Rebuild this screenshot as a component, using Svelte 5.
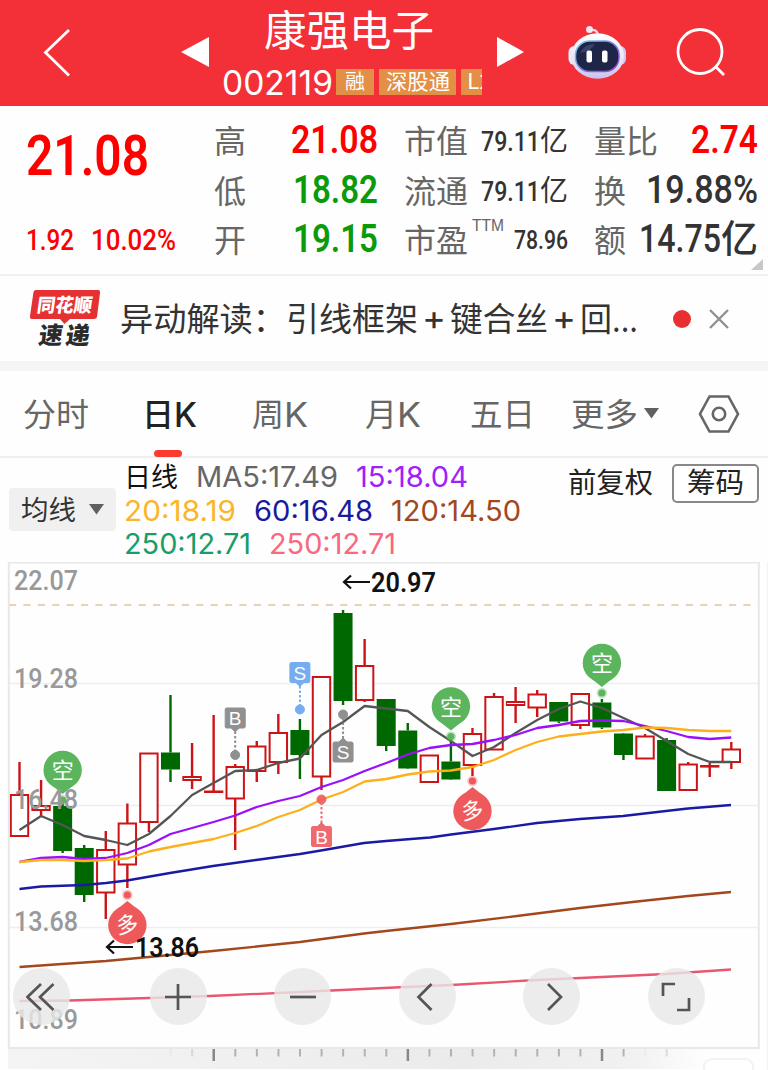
<script lang="ts">
	const step = 21.57;
	const cx = (i: number) => 19.5 + i * step;

	// [up, body top, body bottom, high, low]
	const candles: [number, number, number, number, number][] = [
		[1, 795, 836, 762, 836],
		[1, 806, 810, 780, 816],
		[0, 806, 851, 798, 853],
		[0, 848, 895, 845, 902],
		[1, 850, 892.5, 831, 919],
		[1, 823.5, 864.5, 803.5, 888],
		[1, 753.5, 822, 753, 832],
		[0, 752.5, 769.5, 695, 782],
		[1, 777, 780, 743, 789],
		[1, 791.5, 792, 715, 792],
		[1, 767, 798.5, 764, 850],
		[1, 746.5, 771, 741, 782],
		[1, 733, 762, 714, 774],
		[0, 730, 755, 719, 779],
		[1, 677, 776.5, 677, 790],
		[0, 613, 701, 610, 705],
		[1, 666, 700, 639, 702],
		[0, 699, 746, 699, 751],
		[0, 730.5, 768.5, 723, 769],
		[1, 755.5, 782, 756, 782],
		[0, 761.5, 779.5, 738, 780],
		[1, 734, 765, 728, 776],
		[1, 697, 749.5, 693, 749],
		[1, 702, 705, 687, 723],
		[1, 694.5, 707.5, 690, 717],
		[0, 702, 721.5, 702, 723],
		[1, 694, 725, 694, 729],
		[0, 702.5, 727.5, 699, 729],
		[0, 733.5, 755, 733, 760],
		[1, 736.5, 758.5, 734, 758],
		[0, 740, 791, 738, 791],
		[1, 764.5, 790, 762, 790],
		[1, 766, 766.6, 763, 777],
		[1, 749.5, 762, 742, 769]
	];

	const ma5 = [830, 816, 825, 836, 840, 845, 834, 816, 795, 783, 771, 770, 763, 758.5, 735, 722, 706, 708.5, 711, 727, 741, 756, 747, 733, 720, 709, 701.5, 708, 718, 728, 741, 754, 762, 762];
	const ma15 = [862, 858, 857, 859, 858, 853, 845, 834, 828, 822, 815.5, 807, 801, 796, 787, 780, 771, 763, 754.5, 748, 745, 744, 740, 735, 728, 725, 721, 720.5, 721, 726, 731, 737, 739, 737.5];
	const ma20 = [862, 860, 860, 861, 860, 858.5, 851.5, 847, 843, 839, 833, 826, 817, 810, 799.5, 792, 781.5, 779, 774.5, 771.5, 770.5, 767, 760, 750, 742, 736.5, 734, 731.5, 730, 727.5, 728, 730, 731, 731];

	const join = (ys: number[]) => ys.map((y, i) => `${cx(i).toFixed(1)},${y}`).join(' ');

	const lines = [
		{ color: '#a3471c', points: '19.5,967 62,964 106,961 213,951 300,942 364,933.5 386,931 451,924 517,916 580,908 637,901.5 688,896 731,892' },
		{ color: '#e8566f', points: '19.5,1001 70,1000.5 149,998 210,996 300,992 384,988 451,985 537,980 602,977 666,974 731,969.5' },
		{ color: '#1a1aa5', points: '19.5,889 41,886.5 84,885 106,883 127,880.5 170,873 213,866 256,860 300,854 321,850.5 364,843 386,841 430,837.5 451,834.5 494,829 537,823 580,819 623,816 666,811 688,808.5 731,805' },
		{ color: '#555', points: join(ma5) },
		{ color: '#9a10fb', points: join(ma15) },
		{ color: '#fbb01c', points: join(ma20) }
	];

	const pins = [
		{ i: 2, y: 770, up: false },
		{ i: 20, y: 706.5, up: false },
		{ i: 27, y: 663, up: false },
		{ i: 5, y: 925, up: true },
		{ i: 21, y: 811, up: true }
	];

	const marks = [
		{ i: 10, y: 718, dot: 755, text: 'B', color: '#858585' },
		{ i: 13, y: 672.5, dot: 709.5, text: 'S', color: '#67a5ef' },
		{ i: 15, y: 752, dot: 714.5, text: 'S', color: '#858585' },
		{ i: 14, y: 836.5, dot: 799.5, text: 'B', color: '#ee5b60' }
	];

	const axis = [
		{ text: '22.07', y: 590 },
		{ text: '19.28', y: 687.5 },
		{ text: '16.48', y: 809 },
		{ text: '13.68', y: 931 },
		{ text: '10.89', y: 1029 }
	];

	const ticks = Array.from({ length: 24 }, (_, i) => ({
		x: 170.6 + i * step,
		major: i % 9 === 2,
		opacity: i < 2 || i > 21 ? 0.3 * (i % 2) + 0.1 : 1
	}));

	const controls = ['first', 'plus', 'minus', 'prev', 'next', 'expand'];
</script>

{#snippet fit(text: string, width: number, size: number, cls = '')}
	<svg class="fit {cls}" {width} height={size}>
		<text y={size * 0.87} font-size={size} textLength={width} lengthAdjust="spacingAndGlyphs">{text}</text>
	</svg>
{/snippet}

<div class="app">
	<header>
		<svg class="back" width="28" height="50" viewBox="43 28 28 50"><path d="M69 30L45.500 52.500L69 75.500" /></svg>
		<svg class="tri" width="28" height="32" viewBox="0 0 28 32"><path d="M0 16L28 1V31Z" /></svg>
		<div class="stock">
			{@render fit('康强电子', 170, 42, 'name')}
			<div class="code">
				{@render fit('002119', 111, 34, 'inter')}
				<div class="tags">
					<span>{@render fit('融', 20, 20)}</span>
					<span class="wide">{@render fit('深股通', 64, 21)}</span>
					<span class="cut">{@render fit('L2', 25, 21)}</span>
				</div>
			</div>
		</div>
		<svg class="tri next" width="28" height="32" viewBox="0 0 28 32"><path d="M27 16L0 1V31Z" /></svg>
		<svg class="robot" width="60" height="56" viewBox="567 23 60 56">
			<defs>
				<linearGradient id="shell" x1="0" y1="0" x2="0" y2="1">
					<stop offset="0" stop-color="#fff" />
					<stop offset=".65" stop-color="#e6e0f5" />
					<stop offset="1" stop-color="#c6c2ee" />
				</linearGradient>
				<linearGradient id="rim" x1="0" y1="0" x2="1" y2="1">
					<stop offset="0" stop-color="#75dff0" />
					<stop offset=".6" stop-color="#7f70dd" />
					<stop offset="1" stop-color="#9c42cc" />
				</linearGradient>
			</defs>
			<path d="M590 28Q598 27 598 34" fill="none" stroke="#f4d5df" stroke-width="2.500" />
			<circle cx="589.500" cy="27.500" r="3.500" fill="#f5e6f0" />
			<rect x="568.500" y="44" width="12" height="19" rx="6" fill="#ece9f8" />
			<rect x="614" y="44" width="12" height="19" rx="6" fill="#cfc9ed" />
			<ellipse cx="597.500" cy="54" rx="26.500" ry="22.800" fill="url(#shell)" />
			<rect x="575.500" y="39" width="43.500" height="30.500" rx="14" fill="#1e2546" stroke="url(#rim)" stroke-width="1.500" />
			<path d="M580 51Q584 42 595 42Q590 50 580 51" fill="#3b4267" />
			<rect x="586.500" y="48.500" width="5.500" height="12" rx="2" fill="#fff" />
			<rect x="602" y="48.500" width="5.500" height="12" rx="2" fill="#fff" />
		</svg>
		<svg class="search" width="50" height="50" viewBox="675 28 50 50">
			<circle cx="699" cy="51.500" r="22" />
			<path d="M715 67L723 75" />
		</svg>
	</header>

	<section class="quote">
		<div class="price red">
			{@render fit('21.08', 123, 55, 'bold')}
			<div class="change">
				{@render fit('1.92', 48, 29, 'semi')}
				{@render fit('10.02%', 85, 29, 'semi')}
			</div>
		</div>
		<dl>
			<div><dt>{@render fit('高', 32, 32)}</dt><dd class="red">{@render fit('21.08', 87, 39, 'bold')}</dd></div>
			<div><dt>{@render fit('低', 32, 32)}</dt><dd class="green">{@render fit('18.82', 85, 39, 'bold')}</dd></div>
			<div><dt>{@render fit('开', 32, 32)}</dt><dd class="green">{@render fit('19.15', 85, 39, 'bold')}</dd></div>
		</dl>
		<dl class="small">
			<div><dt>{@render fit('市值', 64, 32)}</dt><dd>{@render fit('79.11', 59, 27, 'semi')}{@render fit('亿', 28, 29)}</dd></div>
			<div><dt>{@render fit('流通', 64, 32)}</dt><dd>{@render fit('79.11', 59, 27, 'semi')}{@render fit('亿', 28, 29)}</dd></div>
			<div><dt class="pe">{@render fit('市盈', 64, 32)}<sup>{@render fit('TTM', 32, 16, 'arial')}</sup></dt><dd>{@render fit('78.96', 54, 25, 'semi')}</dd></div>
		</dl>
		<dl>
			<div><dt>{@render fit('量比', 64, 32)}</dt><dd class="red">{@render fit('2.74', 67, 39, 'bold')}</dd></div>
			<div><dt>{@render fit('换', 32, 32)}</dt><dd>{@render fit('19.88%', 112, 39, 'semi')}</dd></div>
			<div><dt>{@render fit('额', 32, 32)}</dt><dd>{@render fit('14.75', 82, 39, 'semi')}{@render fit('亿', 37, 38, 'cjk-mid')}</dd></div>
		</dl>
		<i class="corner"></i>
	</section>

	<section class="news">
		<svg class="badge" width="72" height="60" viewBox="29 288 72 60">
			<path d="M36 289H98Q100.500 289 100 292L97 316Q96.500 318 94 318H70L64.500 323L60 318H32Q29.500 318 30 315L33.500 291Q34 289 36 289Z" fill="#e63133" />
			<g transform="skewX(-8)">
				<text x="80" y="311.500" font-size="19" textLength="55" lengthAdjust="spacingAndGlyphs" fill="#fff">同花顺</text>
				<text x="86" y="343" font-size="24" textLength="24" lengthAdjust="spacingAndGlyphs" fill="#2b2b2b">速</text>
				<text x="113" y="343" font-size="24" textLength="24" lengthAdjust="spacingAndGlyphs" fill="#2b2b2b">递</text>
			</g>
		</svg>
		<p>
			{@render fit('异动解读：', 166, 33)}
			{@render fit('引线框架', 132, 33)}
			<span class="plus">{@render fit('+', 24, 34, 'inter')}</span>
			{@render fit('键合丝', 98, 33)}
			<span class="plus">{@render fit('+', 24, 34, 'inter')}</span>
			{@render fit('回', 32, 33)}
			{@render fit('...', 26, 34, 'inter')}
		</p>
		<i class="dot"></i>
		<svg width="20" height="20" viewBox="0 0 20 20"><path d="M1 1L19 19M19 1L1 19" stroke="#909090" stroke-width="2.400" /></svg>
	</section>

	<nav>
		<span>{@render fit('分时', 66, 32)}</span>
		<span class="active">{@render fit('日', 32, 32)}{@render fit('K', 23, 34, 'inter')}</span>
		<span>{@render fit('周', 32, 32)}{@render fit('K', 24, 34, 'inter')}</span>
		<span>{@render fit('月', 32, 32)}{@render fit('K', 24, 34, 'inter')}</span>
		<span>{@render fit('五日', 65, 32)}</span>
		<span class="more">{@render fit('更多', 67, 32)}<svg width="15" height="11" viewBox="0 0 15 11"><path d="M0 0H15L7.500 10.500Z" fill="#606060" /></svg></span>
		<svg class="gear" width="42" height="38" viewBox="0 0 42 38">
			<path d="M11.500 1.500H30.500L40 19L30.500 36.500H11.500L2 19Z" />
			<circle cx="21" cy="19" r="6.200" />
		</svg>
	</nav>

	<section class="legend">
		<button class="pick">{@render fit('均线', 55, 27)}<svg width="15" height="11" viewBox="0 0 15 11"><path d="M0 0H15L7.500 10.500Z" fill="#606060" /></svg></button>
		<div class="rows inter">
			<div>
				<span class="day">{@render fit('日线', 54, 27, 'cjk')}</span>
				<span class="c5">{@render fit('MA5:17.49', 142, 28)}</span>
				<span class="c15">{@render fit('15:18.04', 112, 28)}</span>
			</div>
			<div>
				<span class="c20">{@render fit('20:18.19', 112, 28)}</span>
				<span class="c60">{@render fit('60:16.48', 119, 28)}</span>
				<span class="c120">{@render fit('120:14.50', 130, 28)}</span>
			</div>
			<div>
				<span class="c250">{@render fit('250:12.71', 127, 28)}</span>
				<span class="c251">{@render fit('250:12.71', 127, 28)}</span>
			</div>
		</div>
		<div class="tools">
			<span>{@render fit('前复权', 85, 28)}</span>
			<button class="chip">{@render fit('筹码', 57, 28)}</button>
		</div>
	</section>

	<section class="chart">
		<svg width="768" height="508" viewBox="0 562 768 508">
			<defs>
				<linearGradient id="ruler">
					<stop offset="0" stop-color="#f4f4f4" />
					<stop offset=".3" stop-color="#f0f0f0" />
					<stop offset=".6" stop-color="#ebebeb" />
					<stop offset=".82" stop-color="#f1f1f1" />
					<stop offset=".92" stop-color="#fefefe" />
				</linearGradient>
			</defs>
			<path class="grid" d="M9 683.500H758M9 805.500H758M9 927.500H758" />
			<path d="M9 605H758" stroke="#dfc49e" stroke-width="1.600" stroke-dasharray="7.200 7.200" />

			{#each candles as [up, top, bottom, high, low], i}
				<g class={up ? 'up' : 'down'}>
					<path d="M{cx(i)} {high}V{top}M{cx(i)} {bottom}V{low}" />
					<rect x={cx(i) - (up ? 8.700 : 9.500)} y={top} width={up ? 17.400 : 19} height={bottom - top} />
				</g>
			{/each}

			{#each lines as line}
				<polyline points={line.points} fill="none" stroke={line.color} stroke-width="2.300" stroke-linejoin="round" />
			{/each}

			{#each pins as pin}
				<g transform="translate({cx(pin.i)} {pin.y})" class={pin.up ? 'long' : 'short'}>
					<circle r="19.200" />
					<path d={pin.up ? 'M-10 -16L0 -24L10 -16Z' : 'M-10 16L0 24L10 16Z'} />
					<circle class="halo" cy={pin.up ? -30 : 30} r="5.300" />
					<circle cy={pin.up ? -30 : 30} r="3.600" />
					<text y={pin.up ? 7.500 : 8} text-anchor="middle" transform={pin.up ? 'rotate(-8)' : undefined}>{pin.up ? '多' : '空'}</text>
				</g>
			{/each}

			<g class="axis">
				{#each axis as a}
					<text x="14" y={a.y} textLength="64" lengthAdjust="spacingAndGlyphs">{a.text}</text>
				{/each}
			</g>

			{#each marks as m}
				<g fill={m.color} stroke={m.color} opacity=".9">
					<path d="M{cx(m.i)} {m.y}V{m.dot}" stroke-width="2" stroke-dasharray="2.500 2" />
					<rect x={cx(m.i) - 10} y={m.y - 10} width="20" height="20" rx="1.500" />
					<path
						d={m.dot > m.y
							? `M${cx(m.i) - 4} ${m.y + 10}h8l-4 4z`
							: `M${cx(m.i) - 4} ${m.y - 10}h8l-4 -4z`}
					/>
					<circle cx={cx(m.i)} cy={m.dot} r="4.500" />
					<text class="letter" x={cx(m.i)} y={m.y + 7} text-anchor="middle">{m.text}</text>
				</g>
			{/each}

			<g class="extreme">
				<path d="M370 582H344M351 575.500L344 582L351 588.500" />
				<text x="371" y="592" textLength="65" lengthAdjust="spacingAndGlyphs">20.97</text>
				<path d="M133 947H107M114 940.500L107 947L114 953.500" />
				<text x="135" y="957" textLength="64" lengthAdjust="spacingAndGlyphs">13.86</text>
			</g>

			<rect x="8" y="1048" width="760" height="21" fill="url(#ruler)" />
			{#each ticks as t}
				<path d="M{t.x} 1049V{t.major ? 1061 : 1056.500}" stroke={t.major ? '#888' : '#b2b2b2'} stroke-width={t.major ? 2.500 : 2} opacity={t.opacity} />
			{/each}
			<rect x="704" y="1059" width="49" height="20" rx="8" fill="#fff" stroke="#f2f2f2" stroke-width="2" />
			<rect x="8.800" y="562.500" width="750" height="485.500" fill="none" stroke="#e8e8e8" stroke-width="2" />
			<path d="M767.500 562V1070" stroke="#f3f3f3" />
		</svg>

		<div class="controls">
			{#each controls as name}
				<button aria-label={name}>
					<svg width="30" height="30" viewBox="0 0 30 30">
						{#if name === 'first'}
							<path d="M15 2L1.500 15L15 28M27.500 2L14 15L27.500 28" />
						{:else if name === 'plus'}
							<path d="M2 15H28M15 2V28" />
						{:else if name === 'minus'}
							<path d="M2 15H28" />
						{:else if name === 'prev'}
							<path d="M19.500 2L6.500 15L19.500 28" />
						{:else if name === 'next'}
							<path d="M11 2L24 15L11 28" />
						{:else}
							<path d="M2 14V2H14M16 28H28V16" />
						{/if}
					</svg>
				</button>
			{/each}
		</div>
	</section>
</div>

<style>
	:global(body) {
		background: #fff;
	}

	.app {
		width: 768px;
		height: 1070px;
		overflow: hidden;
		background: #fefefe;
		color: #333;
		font-family: 'Noto Sans CJK SC', sans-serif;
	}

	.fit {
		display: block;
		flex: none;
		overflow: visible;
		fill: currentColor;
	}

	.inter {
		font-family: Inter, sans-serif;
	}

	.arial {
		font-family: 'Liberation Sans', sans-serif;
	}

	.bold,
	.semi {
		font-family: Roboto, sans-serif;
		font-weight: 600;
	}

	.semi {
		font-weight: 500;
	}

	.cjk {
		font-family: 'Noto Sans CJK SC', sans-serif;
	}

	.cjk-mid {
		font-weight: 500;
	}

	.red {
		color: #fe0000;
	}

	.green {
		color: #0a9a0a;
	}

	button {
		display: flex;
		align-items: center;
		justify-content: center;
		padding: 0;
		border: 0;
		font: inherit;
		color: inherit;
	}

	header {
		display: flex;
		align-items: center;
		box-sizing: border-box;
		height: 106px;
		padding-left: 43px;
		background: #f33038;
		color: #fff;
	}

	.back,
	.search {
		fill: none;
		stroke: #fff;
		stroke-width: 2.8;
	}

	.tri {
		margin: 0 13px 2px 110px;
		fill: #fff;
	}

	.tri.next {
		margin: 0 42px 2px 15px;
	}

	.stock {
		display: flex;
		flex-direction: column;
		gap: 14px;
		width: 260px;
		margin-top: 1px;
	}

	.name {
		margin-left: 42px;
	}

	.code {
		display: flex;
		align-items: center;
		width: 260px;
		height: 34px;
		gap: 3px;
		overflow: hidden;
	}

	.tags {
		display: flex;
		gap: 5px;
	}

	.tags span {
		display: flex;
		align-items: center;
		justify-content: center;
		flex: none;
		width: 38px;
		height: 26px;
		background: #e38f45;
	}

	.tags .wide {
		width: 77px;
	}

	.tags .cut {
		justify-content: flex-start;
		box-sizing: border-box;
		padding-left: 6px;
	}

	.search {
		margin-left: 49px;
	}

	.quote {
		position: relative;
		display: grid;
		grid-template-columns: 162px 164px 164px 164px;
		column-gap: 26px;
		box-sizing: border-box;
		height: 170px;
		padding: 10px 0 0 25.5px;
		border-bottom: 2px solid #f0f0f0;
	}

	.price {
		padding-top: 11px;
	}

	.change {
		display: flex;
		gap: 17px;
		margin-top: 43px;
	}

	dl {
		margin: 0;
	}

	dl > div {
		display: flex;
		align-items: center;
		justify-content: space-between;
		height: 49.8px;
	}

	dt {
		color: #666;
	}

	dd {
		display: flex;
		align-items: center;
		margin: 0 0 5px;
	}

	.small dd {
		margin-bottom: 1px;
	}

	.pe {
		display: flex;
	}

	sup {
		margin: -7px 0 0 4px;
	}

	.corner {
		position: absolute;
		right: 5px;
		bottom: 4px;
		border-bottom: 11px solid #c8c8c8;
		border-left: 12px solid transparent;
	}

	.news {
		display: flex;
		align-items: center;
		height: 85px;
		padding-left: 29px;
		border-bottom: 10px solid #f5f5f5;
	}

	.badge text {
		font-weight: 900;
	}

	.news p {
		display: flex;
		align-items: center;
		width: 520px;
		margin: 0 33px 0 19px;
	}

	.plus {
		margin: 0 4px 4px;
	}

	.dot {
		width: 18px;
		height: 18px;
		margin-right: 18px;
		border-radius: 50%;
		background: #e83030;
	}

	nav {
		display: flex;
		align-items: center;
		box-sizing: border-box;
		height: 87px;
		padding-left: 23px;
		border-bottom: 2px solid #efefef;
		color: #666;
	}

	nav span {
		position: relative;
		display: flex;
		align-items: center;
		margin-right: 57px;
	}

	nav span:first-child {
		margin-right: 53px;
	}

	nav span:nth-child(2) {
		margin-right: 55px;
	}

	nav span:nth-child(4) {
		margin-right: 49px;
	}

	nav span:nth-child(5) {
		margin-right: 36px;
	}

	nav .more {
		gap: 6px;
		margin-right: 39px;
	}

	.active {
		font-weight: 500;
		color: #222;
	}

	.active::after {
		content: '';
		position: absolute;
		left: 12px;
		bottom: -26px;
		width: 28px;
		height: 7px;
		border-radius: 4px;
		background: #fb3a30;
	}

	.gear {
		fill: none;
		stroke: #666;
		stroke-width: 2.6;
	}

	.legend {
		display: flex;
		height: 104px;
		padding-left: 9px;
	}

	.pick {
		gap: 13px;
		width: 107px;
		height: 43px;
		margin: 30px 8px 0 0;
		border-radius: 4px;
		background: #f0f0f0;
	}

	.rows > div {
		display: flex;
		align-items: center;
		gap: 18px;
		height: 33.8px;
	}

	.rows {
		width: 440px;
		padding-top: 2px;
	}

	.day {
		color: #111;
	}

	.c5 {
		color: #666;
	}

	.c15 {
		color: #a020f8;
	}

	.c20 {
		color: #fbb52a;
	}

	.c60 {
		color: #1a1a9e;
	}

	.c120 {
		color: #a3471c;
	}

	.c250 {
		color: #189c68;
	}

	.c251 {
		color: #fb6680;
	}

	.tools {
		display: flex;
		align-items: center;
		gap: 19px;
		height: 38px;
		margin: 6px 0 0 4px;
		color: #222;
	}

	.chip {
		box-sizing: border-box;
		width: 87px;
		height: 39px;
		border: 2px solid #888;
		border-radius: 5px;
		background: #fff;
	}

	.chart {
		position: relative;
		height: 508px;
	}

	.chart > svg {
		display: block;
	}

	.grid {
		stroke: #eee;
		stroke-width: 1.5;
	}

	.axis {
		fill: #999;
		font: 500 28px Roboto, sans-serif;
	}

	.up rect {
		fill: #fff;
		stroke: #cc1417;
		stroke-width: 2;
	}

	.up path {
		stroke: #cc1417;
		stroke-width: 2.4;
	}

	.down rect {
		fill: #006800;
	}

	.down path {
		stroke: #006800;
		stroke-width: 2.4;
	}

	.short {
		fill: #5ab55d;
	}

	.long {
		fill: #ee5a5b;
	}

	.halo {
		opacity: 0.35;
	}

	.short text,
	.long text {
		fill: #fff;
		font-size: 22px;
	}

	.letter {
		fill: #fff;
		stroke: none;
		font: 500 19px 'Liberation Sans', sans-serif;
	}

	.extreme path {
		fill: none;
		stroke: #111;
		stroke-width: 2.2;
	}

	.extreme text {
		fill: #111;
		font: 600 28px Roboto, sans-serif;
	}

	.controls {
		position: absolute;
		top: 406px;
		left: 12.5px;
		display: flex;
		gap: 67.5px;
	}

	.controls button {
		width: 57px;
		height: 57px;
		border-radius: 50%;
		background: rgba(232, 232, 232, 0.82);
	}

	.controls button:first-child {
		margin-right: 12.5px;
	}

	.controls path {
		fill: none;
		stroke: #555;
		stroke-width: 2.7;
	}
</style>
